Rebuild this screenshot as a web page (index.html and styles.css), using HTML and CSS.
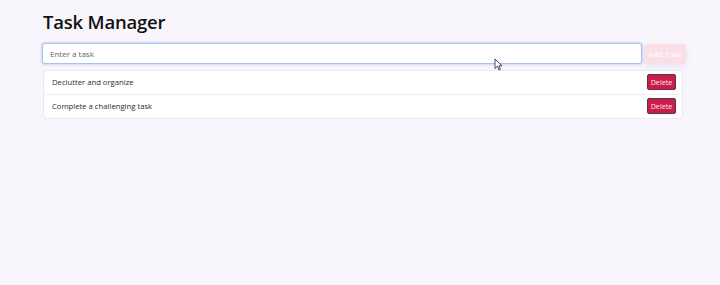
FILE: index.html
```html
<!DOCTYPE html>
<html lang="en">
<head>
<meta charset="utf-8">
<title>Task Manager</title>
<link rel="stylesheet" href="styles.css">
</head>
<body>
<main class="app">
  <h1 class="title">Task Manager</h1>
  <form class="add-row">
    <input class="task-input" type="text" placeholder="Enter a task">
    <button class="add-btn" type="button">Add Task</button>
  </form>
  <ul class="task-list">
    <li class="task-item"><span class="task-text">Declutter and organize</span><button class="del-btn" type="button">Delete</button></li>
    <li class="task-item"><span class="task-text">Complete a challenging task</span><button class="del-btn" type="button">Delete</button></li>
  </ul>
</main>
<svg class="cursor" width="9" height="13" viewBox="0 0 9 13"><path d="M1 1 L1 10.5 L3.4 8.3 L5 12 L6.4 11.4 L4.9 7.8 L8 7.8 Z" fill="#fff" stroke="#333" stroke-width="0.9" stroke-linejoin="round"/></svg>
</body>
</html>
```
FILE: styles.css
```css
* { box-sizing: border-box; }
html, body { margin: 0; padding: 0; }
body {
  background: #f8f6fc;
  font-family: "Open Sans", "Noto Sans", sans-serif;
  color: #222;
  width: 720px;
  height: 285px;
  position: relative;
  overflow: hidden;
}
.app {
  padding: 8px 0 0 43px;
  width: 686px;
}
.title {
  margin: 0 0 8px 0;
  font-size: 18.5px;
  font-weight: 600;
  line-height: 27px;
  color: #111;
  letter-spacing: -0.2px;
}
.add-row {
  display: flex;
  align-items: center;
  gap: 2px;
  margin: 0 0 6px -1px;
}
.task-input {
  flex: 1;
  height: 21px;
  border: 1.5px solid #a9c2ea;
  border-radius: 3px;
  padding: 0 7px;
  font-family: inherit;
  font-size: 8px;
  color: #333;
  background: #fff;
  box-shadow: 0 0 0 1.5px rgba(180, 205, 240, 0.45);
  outline: none;
}
.task-input::placeholder { color: #666; }
.add-btn {
  width: 42px;
  height: 20px;
  border: none;
  border-radius: 3px;
  background: #fbdfe6;
  color: #fff;
  font-family: inherit;
  font-size: 8px;
  padding: 0;
  box-shadow: 0 2px 6px rgba(120, 80, 100, 0.1);
}
.task-list {
  list-style: none;
  margin: 0;
  padding: 0;
  width: 640px;
  background: #fff;
  border: 1px solid #ebe8f0;
  border-radius: 4px;
}
.task-item {
  display: flex;
  align-items: center;
  justify-content: space-between;
  height: 24px;
  padding: 0 6px 1px 8px;
  border-bottom: 1px solid #efedf3;
}
.task-item:last-child { border-bottom: none; height: 23px; }
.task-text {
  font-size: 7.7px;
  color: #2a2a2a;
}
.del-btn {
  width: 29px;
  height: 16px;
  padding: 0;
  border: 1px solid #4a3944;
  border-left-width: 1.5px;
  border-radius: 2px;
  background: #cc1c47;
  color: #fbe9ee;
  font-family: inherit;
  font-size: 7.2px;
}
.cursor {
  position: absolute;
  left: 494px;
  top: 58px;
}
```
